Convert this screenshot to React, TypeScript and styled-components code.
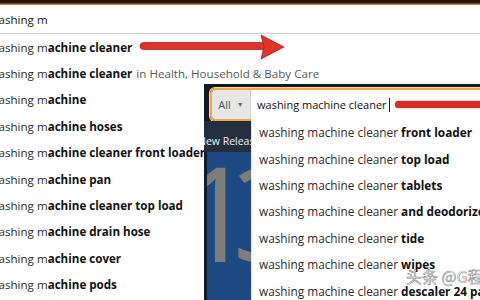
import React from 'react';
import styled, { createGlobalStyle } from 'styled-components';

const GlobalStyle = createGlobalStyle`
  html, body {
    margin: 0;
    padding: 0;
    background: #ffffff;
  }
  body {
    font-family: "Open Sans", "Noto Sans", Arial, sans-serif;
  }
`;

const Page = styled.div`
  position: relative;
  width: 480px;
  height: 300px;
  overflow: hidden;
  background: #ffffff;
`;

const TopStrip = styled.div`
  height: 5px;
  background: linear-gradient(#1a1108 0%, #2b1a0a 55%, #e9a35c 100%);
`;

const SearchLine = styled.div`
  height: 28px;
  display: flex;
  align-items: center;
  border-bottom: 1px solid #d0d0d0;
  font-size: 11.6px;
  color: #222;
  margin-left: -10.5px;
`;

const SuggestList = styled.ul`
  list-style: none;
  margin: 0;
  padding: 0;
`;

const Suggest = styled.li<{ $inset?: boolean }>`
  height: 26.4px;
  display: flex;
  align-items: center;
  white-space: nowrap;
  font-size: ${p => (p.$inset ? '11.8px' : '11.6px')};
  color: #2b2b2b;
  margin-left: ${p => (p.$inset ? '0' : '-10.5px')};
`;

const Bold = styled.b`
  font-weight: 700;
  color: #111;
`;

const Dept = styled.span`
  color: #565959;
  margin-left: 4px;
`;

const Arrow = styled.svg`
  position: absolute;
  left: 136px;
  top: 32px;
`;

const Inset = styled.div`
  position: absolute;
  left: 204px;
  top: 84px;
  width: 276px;
  height: 216px;
  background: #131921;
  display: flex;
  flex-direction: column;
  padding-top: 4px;
  box-sizing: border-box;
`;

const SearchBar = styled.div`
  height: 33px;
  margin-left: 6px;
  display: flex;
  flex-shrink: 0;
  border: 2px solid #f3a847;
  border-right: none;
  border-radius: 5px 0 0 5px;
  box-shadow: 0 0 0 1px #ffd7a0;
  overflow: hidden;
  box-sizing: border-box;
`;

const Category = styled.div`
  width: 38px;
  flex-shrink: 0;
  display: flex;
  align-items: center;
  justify-content: center;
  gap: 6px;
  background: #e6e6e6;
  color: #555;
  font-size: 11px;
  border-right: 1px solid #cdcdcd;
`;

const Caret = styled.span`
  font-size: 7px;
  color: #666;
`;

const InputArea = styled.div`
  flex: 1;
  min-width: 0;
  display: flex;
  align-items: center;
  background: #fff;
  padding-left: 6px;
  font-size: 11px;
  color: #111;
  white-space: nowrap;
`;

const Cursor = styled.span`
  width: 1px;
  height: 14px;
  background: #222;
  margin-left: 2px;
  flex-shrink: 0;
`;

const RedMark = styled.span`
  flex: 1;
  height: 7px;
  margin-left: 5px;
  border-radius: 4px 0 0 4px;
  background: #dc2b22;
  box-shadow: 0 0 1px #8a1a14;
`;

const Body = styled.div`
  flex: 1;
  min-height: 0;
  display: flex;
`;

const SideColumn = styled.div`
  width: 47px;
  flex-shrink: 0;
  display: flex;
  flex-direction: column;
  overflow: hidden;
`;

const NavStrip = styled.div`
  height: 31px;
  flex-shrink: 0;
  background: #232f3e;
  color: #f0f0f0;
  font-size: 10.5px;
  display: flex;
  align-items: flex-end;
  padding-bottom: 4px;
  box-sizing: border-box;
  white-space: nowrap;
  margin-left: -6px;
`;

const Banner = styled.div`
  flex: 1;
  background: #1d4a83;
  border-left: 3px solid #0f1c2e;
  color: #7e7e79;
  font-family: "Open Sans", Arial, sans-serif;
  font-size: 132px;
  line-height: 0.9;
  letter-spacing: -22px;
  text-indent: -28px;
  white-space: nowrap;
  overflow: hidden;
`;

const Dropdown = styled.ul`
  flex: 1;
  min-width: 0;
  overflow: hidden;
  list-style: none;
  margin: -2px 0 0 0;
  padding: 0 0 0 7px;
  background: #fff;
  border-left: 1px solid #e3e3e3;
`;

const Watermark = styled.div`
  position: absolute;
  left: 406px;
  top: 264px;
  font-family: "Noto Sans CJK SC", sans-serif;
  font-size: 16px;
  color: rgba(255, 255, 255, 0.9);
  -webkit-text-stroke: 0.6px #8a8a8a;
  white-space: nowrap;
`;

const leftItems: { bold: string; dept?: string }[] = [
  { bold: 'achine cleaner' },
  { bold: 'achine cleaner', dept: 'in Health, Household & Baby Care' },
  { bold: 'achine' },
  { bold: 'achine hoses' },
  { bold: 'achine cleaner front loader' },
  { bold: 'achine pan' },
  { bold: 'achine cleaner top load' },
  { bold: 'achine drain hose' },
  { bold: 'achine cover' },
  { bold: 'achine pods' },
];

const insetItems = [
  'front loader',
  'top load',
  'tablets',
  'and deodorizer',
  'tide',
  'wipes',
  'descaler 24 pack',
];

export default function App() {
  return (
    <Page>
      <GlobalStyle />
      <TopStrip />
      <SearchLine>washing m</SearchLine>
      <SuggestList>
        {leftItems.map((it, i) => (
          <Suggest key={i}>
            washing m<Bold>{it.bold}</Bold>
            {it.dept && <Dept>{it.dept}</Dept>}
          </Suggest>
        ))}
      </SuggestList>

      <Arrow width="152" height="30" viewBox="0 0 152 30">
        <rect x="4" y="10.5" width="126" height="7" rx="3.5" fill="#e0342a" stroke="#a3231b" strokeWidth="0.8" />
        <polygon points="125,3 148,15 125,27 128,15" fill="#e0342a" stroke="#a3231b" strokeWidth="0.8" strokeLinejoin="round" />
      </Arrow>

      <Inset>
        <SearchBar>
          <Category>
            All <Caret>▼</Caret>
          </Category>
          <InputArea>
            washing machine cleaner
            <Cursor />
            <RedMark />
          </InputArea>
        </SearchBar>
        <Body>
          <SideColumn>
            <NavStrip>New Releases</NavStrip>
            <Banner>13</Banner>
          </SideColumn>
          <Dropdown>
            {insetItems.map(s => (
              <Suggest key={s} $inset>
                washing machine cleaner&nbsp;<Bold>{s}</Bold>
              </Suggest>
            ))}
          </Dropdown>
        </Body>
      </Inset>

      <Watermark>头条 @G程序员</Watermark>
    </Page>
  );
}
